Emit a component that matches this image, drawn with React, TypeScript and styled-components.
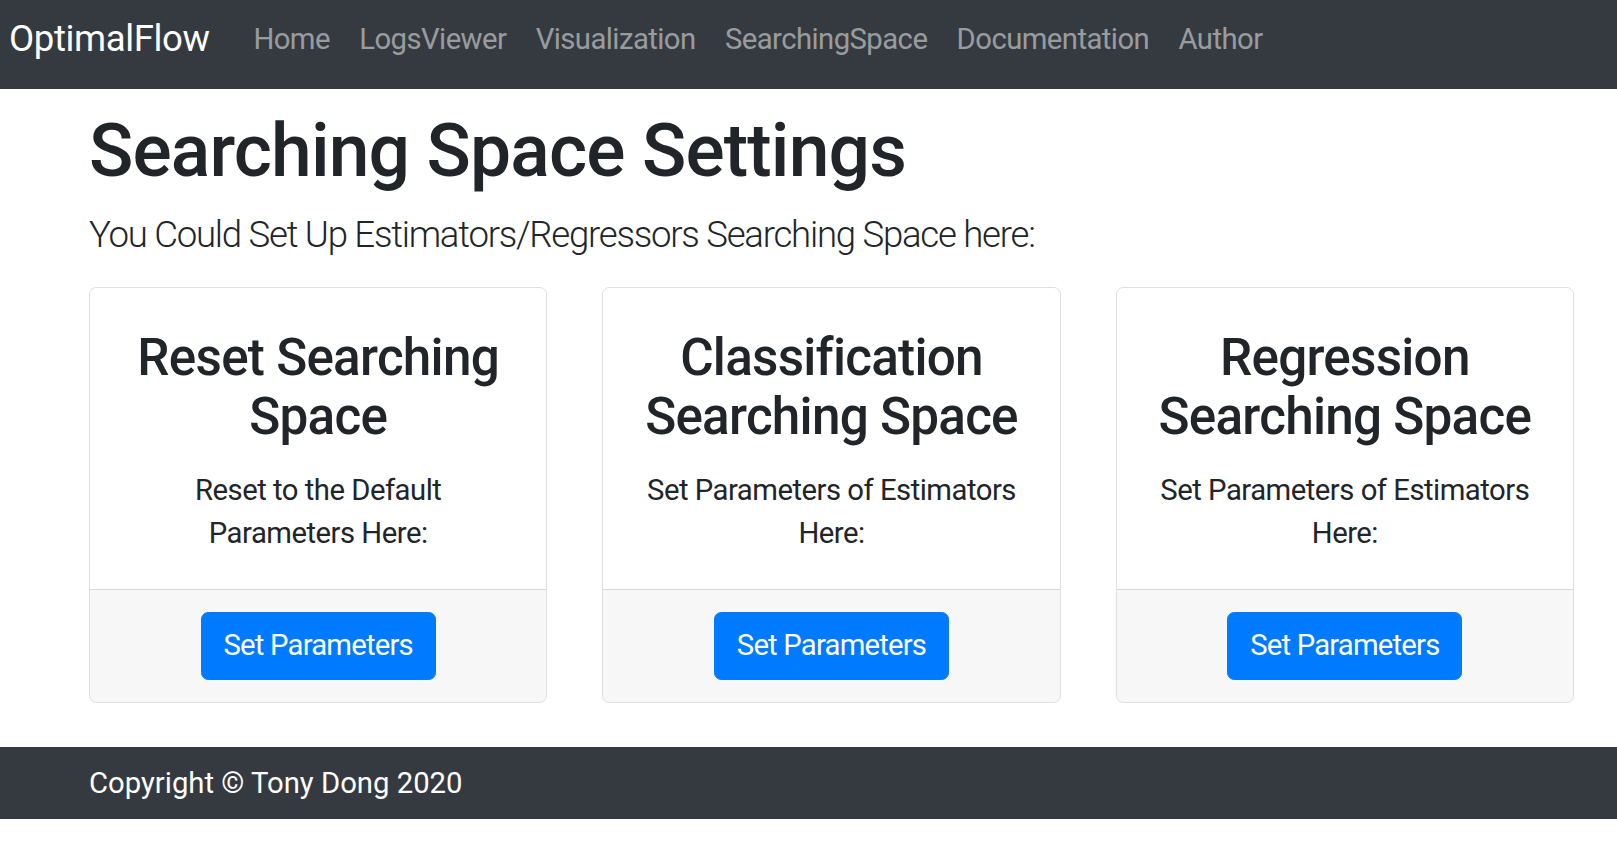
import React from 'react';
import styled, { createGlobalStyle } from 'styled-components';

const GlobalStyle = createGlobalStyle`
  * {
    box-sizing: border-box;
  }
  html,
  body {
    margin: 0;
    padding: 0;
  }
  body {
    font-family: Roboto, 'Segoe UI', 'Liberation Sans', sans-serif;
    font-size: 29.28px;
    line-height: 1.5;
    letter-spacing: -0.55px;
    color: #212529;
    background: #fff;
  }
`;

const Navbar = styled.nav`
  display: flex;
  align-items: center;
  height: 89px;
  padding: 0 9px 10px;
  background-color: #343a40;
`;

const Brand = styled.a`
  margin-right: 29.28px;
  font-size: 36.6px;
  line-height: 1.5;
  letter-spacing: -0.4px;
  color: #fff;
  text-decoration: none;
  white-space: nowrap;
`;

const NavList = styled.ul`
  display: flex;
  margin: 0;
  padding: 0;
  list-style: none;
`;

const NavLink = styled.a`
  display: block;
  padding: 0 14.64px;
  line-height: 1.5;
  color: rgba(255, 255, 255, 0.5);
  text-decoration: none;
  white-space: nowrap;
`;

const Main = styled.main`
  padding: 19px 43px 0 89px;
`;

const PageTitle = styled.h1`
  margin: 0 0 12px;
  font-size: 73.2px;
  font-weight: 500;
  line-height: 1.2;
  letter-spacing: -0.85px;
`;

const Lead = styled.p`
  margin: 0 0 24.4px;
  font-size: 36.6px;
  font-weight: 300;
  line-height: 1.5;
  letter-spacing: -1.25px;
`;

const CardGrid = styled.div`
  display: grid;
  grid-template-columns: repeat(3, 1fr);
  gap: 55px;
`;

const Card = styled.div`
  display: flex;
  flex-direction: column;
  border: 1px solid rgba(0, 0, 0, 0.125);
  border-radius: 7.3px;
  overflow: hidden;
  text-align: center;
`;

const CardBody = styled.div`
  flex: 1;
  padding: 40px 36.6px 34.5px;
`;

const CardTitle = styled.h3`
  margin: 0 0 22.5px;
  font-size: 51.24px;
  font-weight: 500;
  line-height: 59px;
  letter-spacing: -0.75px;
`;

const CardText = styled.p`
  margin: 0;
  line-height: 43px;
  letter-spacing: -0.5px;
`;

const CardFooter = styled.div`
  padding: 22px 36.6px;
  background-color: rgba(0, 0, 0, 0.03);
  border-top: 1px solid rgba(0, 0, 0, 0.125);
`;

const Button = styled.button`
  padding: 11px 22px;
  font-family: inherit;
  font-size: 29.28px;
  line-height: 1.5;
  letter-spacing: -0.8px;
  color: #fff;
  background-color: #007bff;
  border: 1px solid #007bff;
  border-radius: 7.3px;
  cursor: pointer;
`;

const Footer = styled.footer`
  margin-top: 44px;
  padding: 15px 89px 13px;
  background-color: #343a40;
  color: #fff;
  letter-spacing: 0;
`;

const links = ['Home', 'LogsViewer', 'Visualization', 'SearchingSpace', 'Documentation', 'Author'];

const cards = [
  { title: 'Reset Searching Space', text: 'Reset to the Default Parameters Here:' },
  { title: 'Classification Searching Space', text: 'Set Parameters of Estimators Here:' },
  { title: 'Regression Searching Space', text: 'Set Parameters of Estimators Here:' },
];

export default function App() {
  return (
    <>
      <GlobalStyle />
      <Navbar>
        <Brand href="#">OptimalFlow</Brand>
        <NavList>
          {links.map((l) => (
            <li key={l}>
              <NavLink href="#">{l}</NavLink>
            </li>
          ))}
        </NavList>
      </Navbar>
      <Main>
        <PageTitle>Searching Space Settings</PageTitle>
        <Lead>You Could Set Up Estimators/Regressors Searching Space here:</Lead>
        <CardGrid>
          {cards.map((c) => (
            <Card key={c.title}>
              <CardBody>
                <CardTitle>{c.title}</CardTitle>
                <CardText>{c.text}</CardText>
              </CardBody>
              <CardFooter>
                <Button>Set Parameters</Button>
              </CardFooter>
            </Card>
          ))}
        </CardGrid>
      </Main>
      <Footer>Copyright © Tony Dong 2020</Footer>
    </>
  );
}
